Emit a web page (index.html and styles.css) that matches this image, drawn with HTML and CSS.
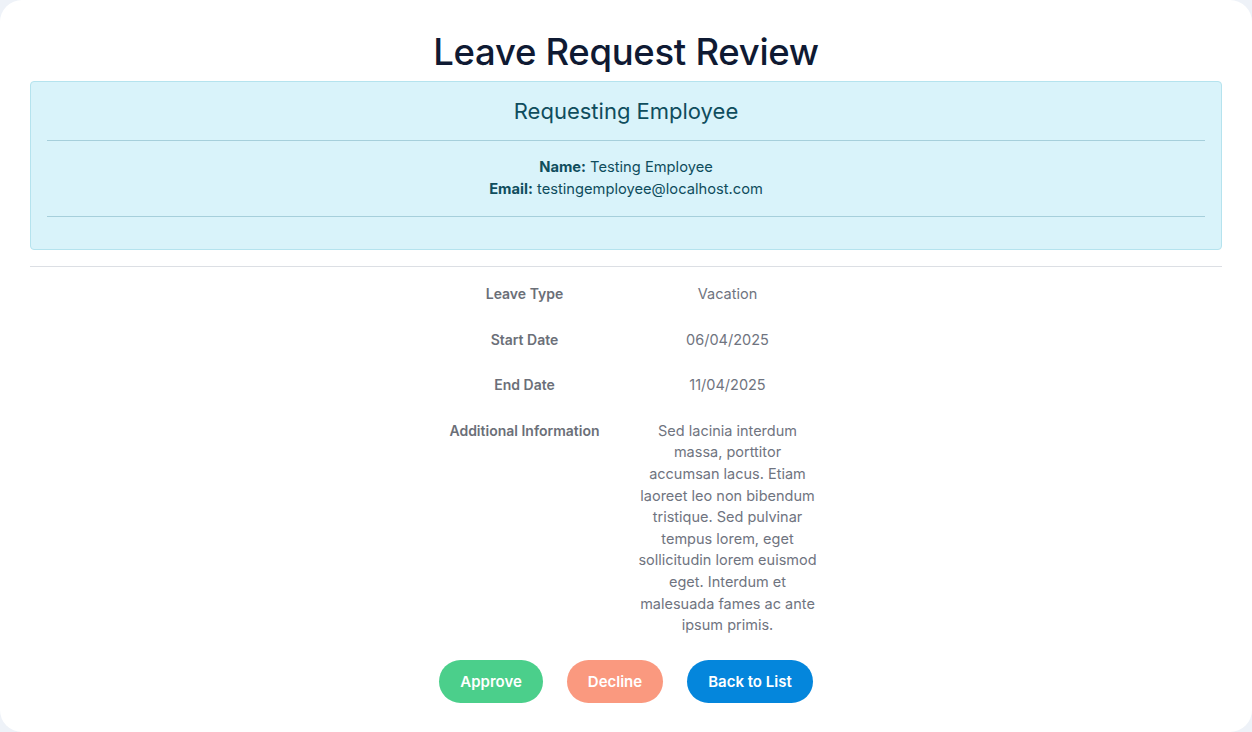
FILE: index.html
```html
<!DOCTYPE html>
<html lang="en">
<head>
<meta charset="utf-8">
<title>Leave Request Review</title>
<link rel="stylesheet" href="styles.css">
</head>
<body>
<main class="card">
  <h1 class="title">Leave Request Review</h1>
  <section class="alert">
    <h2 class="alert-title">Requesting Employee</h2>
    <hr class="alert-hr">
    <p class="alert-line"><strong>Name:</strong> Testing Employee</p>
    <p class="alert-line"><strong>Email:</strong> testingemployee@localhost.com</p>
    <hr class="alert-hr">
  </section>
  <hr class="divider">
  <table class="details">
    <tr><th>Leave Type</th><td>Vacation</td></tr>
    <tr><th>Start Date</th><td>06/04/2025</td></tr>
    <tr><th>End Date</th><td>11/04/2025</td></tr>
    <tr><th>Additional Information</th><td>Sed lacinia interdum massa, porttitor accumsan lacus. Etiam laoreet leo non bibendum tristique. Sed pulvinar tempus lorem, eget sollicitudin lorem euismod eget. Interdum et malesuada fames ac ante ipsum primis.</td></tr>
  </table>
  <div class="actions">
    <button class="btn btn-approve">Approve</button>
    <button class="btn btn-decline">Decline</button>
    <button class="btn btn-back">Back to List</button>
  </div>
</main>
</body>
</html>
```
FILE: styles.css
```css
html, body {
  margin: 0;
  padding: 0;
  background: #eef2f8;
  height: 100%;
}
body {
  font-family: Inter, "Noto Sans", sans-serif;
  color: #6b7280;
}
.card {
  box-sizing: border-box;
  min-height: 732px;
  background: #ffffff;
  border-radius: 22px;
  padding: 28px 30px 20px;
}
.title {
  margin: 0 0 5px;
  font-size: 36.5px;
  line-height: 48px;
  font-weight: 500;
  color: #0f1a33;
  text-align: center;
  letter-spacing: -0.3px;
}
.alert {
  background: #d9f3fa;
  border: 1px solid #b5e3ee;
  border-radius: 4px;
  padding: 16px;
  color: #0f4d5d;
  text-align: center;
}
.alert-title {
  margin: 0;
  font-size: 22px;
  line-height: 26px;
  font-weight: 400;
}
.alert-hr {
  border: 0;
  border-top: 1px solid #a6cfdb;
  margin: 16px 0;
}
.alert-line {
  margin: 0;
  font-size: 14.7px;
  line-height: 21.5px;
}
.alert-line strong {
  font-weight: 700;
}
.divider {
  border: 0;
  border-top: 1px solid #dcdfe4;
  margin: 16px 0 4px;
}
.details {
  margin: 0 auto;
  border-collapse: collapse;
  font-size: 14.5px;
  line-height: 21.6px;
}
.details th,
.details td {
  width: 179px;
  padding: 12px;
  text-align: center;
  vertical-align: top;
}
.details th {
  font-size: 14px;
  font-weight: 600;
  color: #6b6f78;
}
.details td {
  font-weight: 400;
  color: #6f7480;
}
.actions {
  display: flex;
  justify-content: center;
  gap: 24px;
  margin-top: 12px;
}
.btn {
  border: 0;
  border-radius: 999px;
  height: 43px;
  padding: 0 21px;
  font-family: inherit;
  font-size: 15px;
  font-weight: 600;
  color: #ffffff;
}
.btn-approve { background: #4bcf8b; }
.btn-decline { background: #fa997f; }
.btn-back { background: #0486dc; }
```
